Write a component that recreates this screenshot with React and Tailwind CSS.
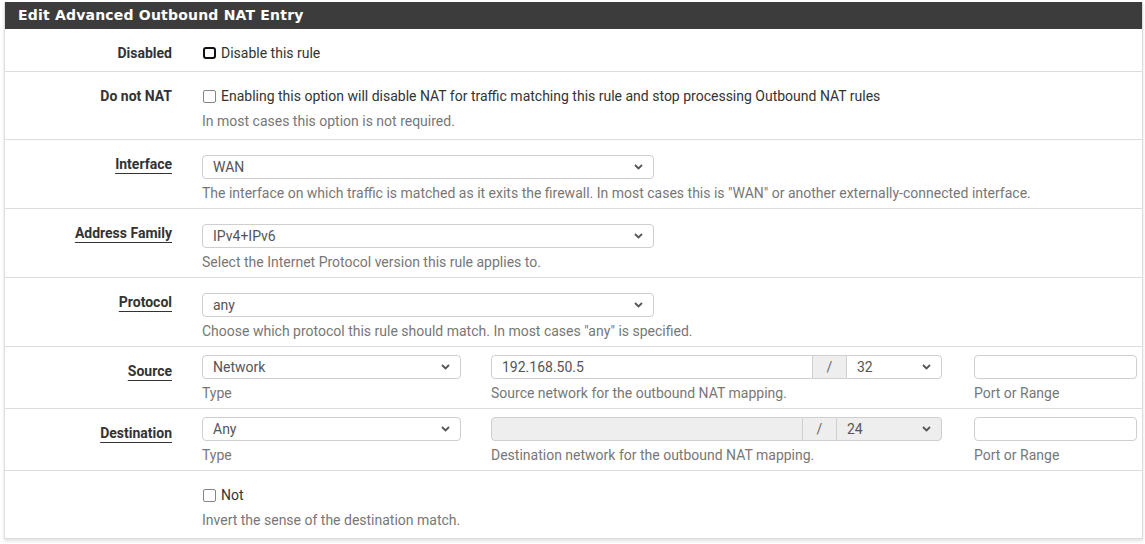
import React from "react";

const Chevron = () => (
  <svg width="9" height="6" viewBox="0 0 9 6" className="shrink-0">
    <path d="M1 1 L4.5 4.5 L8 1" fill="none" stroke="#555" strokeWidth="1.8" />
  </svg>
);

function Select({ value, className = "", disabled = false }) {
  return (
    <div
      className={`h-[24px] flex items-center justify-between pl-[10px] pr-[10px] border border-[#cfcfcf] rounded-[4px] text-[14px] text-[#555] ${
        disabled ? "bg-[#eeeeee]" : "bg-white"
      } ${className}`}
    >
      <span>{value}</span>
      <Chevron />
    </div>
  );
}

function Checkbox({ focused = false }) {
  if (focused) {
    return <span className="ml-[1px] w-[13px] h-[12px] border-2 border-[#111] rounded-[3px] shrink-0" />;
  }
  return <span className="ml-[1px] w-[13px] h-[13px] border border-[#858585] rounded-[2px] bg-white shrink-0" />;
}

function Label({ children, link = false }) {
  return (
    <div className="w-[167px] shrink-0 text-right text-[14px] font-bold text-[#333] leading-[20px]">
      {link ? (
        <span className="underline decoration-[#333] underline-offset-[4px]">{children}</span>
      ) : (
        children
      )}
    </div>
  );
}

function Help({ children }) {
  return <div className="text-[14px] text-[#777] leading-[20px] whitespace-nowrap">{children}</div>;
}

function CheckRow({ label, text, help, focused, last = false }) {
  return (
    <div className={`flex pt-[14px] pb-[8px] ${last ? "" : "border-b border-[#dcdcdc]"}`}>
      <Label>{label}</Label>
      <div className="ml-[30px] flex flex-col gap-[5px]">
        <div className="flex items-center gap-[5px] h-[20px] text-[14px] text-[#333]">
          <Checkbox focused={focused} />
          <span>{text}</span>
        </div>
        {help && <Help>{help}</Help>}
      </div>
    </div>
  );
}

function SelectRow({ label, value, help }) {
  return (
    <div className="flex pt-[15px] pb-[5px] border-b border-[#dcdcdc]">
      <div className="-mt-px">
        <Label link>{label}</Label>
      </div>
      <div className="ml-[30px] flex flex-col gap-[4px]">
        <Select value={value} className="w-[452px]" />
        <Help>{help}</Help>
      </div>
    </div>
  );
}

function AddrRow({ label, type, addr, mask, help, disabled }) {
  return (
    <div className="flex pt-[8px] pb-[5px] border-b border-[#dcdcdc]">
      <div className="pt-[6px]">
        <Label link>{label}</Label>
      </div>
      <div className="ml-[30px] flex flex-col gap-[4px] w-[259px]">
        <Select value={type} className="w-[259px]" />
        <Help>Type</Help>
      </div>
      <div className="ml-[30px] flex flex-col gap-[4px] w-[451px]">
        <div className="flex h-[24px] text-[14px] text-[#555]">
          <div
            className={`flex items-center pl-[10px] border border-[#cfcfcf] rounded-l-[4px] ${
              disabled ? "w-[312px] bg-[#eeeeee]" : "w-[322px] bg-white"
            }`}
          >
            {addr}
          </div>
          <div className="w-[33px] flex items-center justify-center bg-[#eeeeee] border-y border-[#cfcfcf] text-[#666]">
            /
          </div>
          <Select value={mask} disabled={disabled} className="flex-1 rounded-l-none" />
        </div>
        <Help>{help}</Help>
      </div>
      <div className="ml-[32px] flex flex-col gap-[4px] w-[163px]">
        <div className="h-[24px] border border-[#cfcfcf] rounded-[4px] bg-white" />
        <Help>Port or Range</Help>
      </div>
    </div>
  );
}

export default function App() {
  return (
    <div
      className="w-[1145px] h-[544px] bg-white pt-[2px] pl-[4px]"
      style={{ fontFamily: "Roboto, 'Liberation Sans', sans-serif" }}
    >
      <div className="w-[1139px] border border-[#dddddd] border-t-0 shadow-[0_2px_3px_rgba(0,0,0,0.12)] bg-white">
        <div className="h-[27px] bg-[#3c3c3c] flex items-center pl-[13px]">
          <span
            className="text-white text-[14px] font-bold tracking-[0.2px]"
            style={{ fontFamily: "'DejaVu Sans', Verdana, sans-serif" }}
          >
            Edit Advanced Outbound NAT Entry
          </span>
        </div>

        <CheckRow label="Disabled" text="Disable this rule" focused />
        <CheckRow
          label="Do not NAT"
          text="Enabling this option will disable NAT for traffic matching this rule and stop processing Outbound NAT rules"
          help="In most cases this option is not required."
        />
        <SelectRow
          label="Interface"
          value="WAN"
          help={'The interface on which traffic is matched as it exits the firewall. In most cases this is "WAN" or another externally-connected interface.'}
        />
        <SelectRow
          label="Address Family"
          value="IPv4+IPv6"
          help="Select the Internet Protocol version this rule applies to."
        />
        <SelectRow
          label="Protocol"
          value="any"
          help={'Choose which protocol this rule should match. In most cases "any" is specified.'}
        />
        <AddrRow
          label="Source"
          type="Network"
          addr="192.168.50.5"
          mask="32"
          help="Source network for the outbound NAT mapping."
        />
        <AddrRow
          label="Destination"
          type="Any"
          addr=""
          mask="24"
          disabled
          help="Destination network for the outbound NAT mapping."
        />
        <CheckRow label="" text="Not" help="Invert the sense of the destination match." last />
      </div>
    </div>
  );
}
